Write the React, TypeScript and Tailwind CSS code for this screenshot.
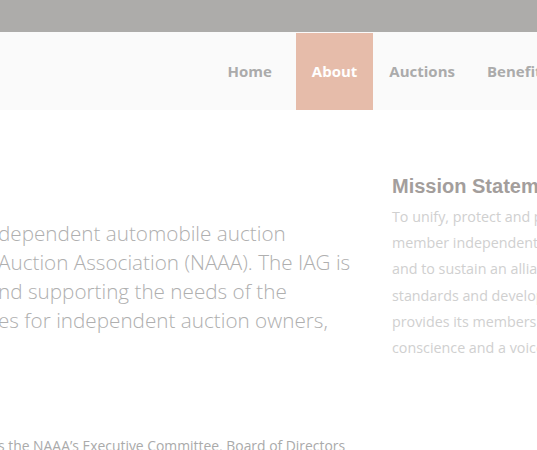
export default function App() {
  const nav = ["Home", "About", "Auctions", "Benefits"];

  return (
    <div className="w-[537px] h-[450px] overflow-hidden bg-white" style={{ fontFamily: "'Open Sans', sans-serif" }}>
      {/* top strip */}
      <div className="h-[32px] bg-[#adacaa]" />

      {/* nav bar */}
      <div className="h-[78px] bg-[#fafafa] flex justify-end pt-[1px]">
        <ul className="flex items-stretch whitespace-nowrap -mr-[28px]">
          {nav.map((item) => (
            <li
              key={item}
              className={
                item === "About"
                  ? "flex items-center px-4 bg-[#e6bcaa] text-white font-bold text-[15px]"
                  : item === "Home"
                  ? "flex items-center px-4 mr-2 text-[#ababab] font-bold text-[15px]"
                  : "flex items-center px-4 text-[#ababab] font-bold text-[15px]"
              }
            >
              {item}
            </li>
          ))}
        </ul>
      </div>

      {/* content */}
      <div className="flex pt-[64px]">
        <div className="w-[394px] shrink-0 -ml-[2px]">
          <div className="pt-[45px] text-[20.7px] leading-[29px] font-light text-[#afafaf] whitespace-nowrap">
            <div>dependent automobile auction</div>
            <div>Auction Association (NAAA). The IAG is</div>
            <div>nd supporting the needs of the</div>
            <div>es for independent auction owners,</div>
          </div>
          <p className="mt-[101px] text-[13.9px] text-[#aaaaaa] whitespace-nowrap">
            s the NAAA’s Executive Committee, Board of Directors
          </p>
        </div>
        <div className="whitespace-nowrap">
          <h2
            className="text-[20px] leading-[24px] font-bold text-[#a39e9c]"
            style={{ fontFamily: "'Liberation Sans', Arial, sans-serif" }}
          >
            Mission Statement
          </h2>
          <div className="mt-[6px] text-[14.3px] leading-[26.2px] text-[#d0d0d0]">
            <div>To unify, protect and promote the interests of</div>
            <div>member independently owned auctions,</div>
            <div>and to sustain an alliance that sets</div>
            <div>standards and develops programs. The IAG</div>
            <div>provides its membership with a</div>
            <div>conscience and a voice.</div>
          </div>
        </div>
      </div>
    </div>
  );
}
